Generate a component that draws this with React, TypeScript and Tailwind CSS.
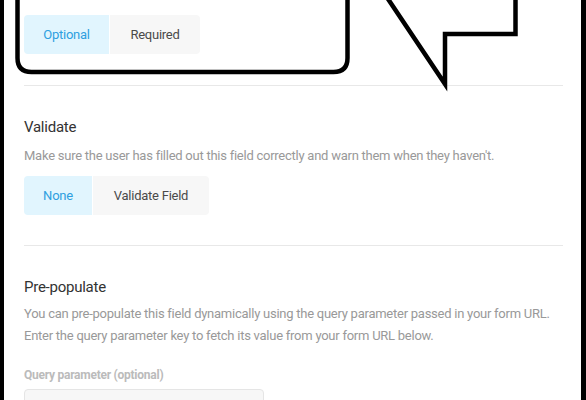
import React from 'react';

function Toggle({ options, active }: { options: { label: string; w: string }[]; active: number }) {
  return (
    <div className="flex gap-px">
      {options.map((o, i) => (
        <div
          key={o.label}
          className={`flex h-[39px] items-center justify-center text-[13px] ${o.w} ${
            i === 0 ? 'rounded-l' : ''
          } ${i === options.length - 1 ? 'rounded-r' : ''} ${
            i === active ? 'bg-[#e1f5fe] text-[#2e9fe0]' : 'bg-[#f7f7f7] text-[#4a4a4a]'
          }`}
        >
          {o.label}
        </div>
      ))}
    </div>
  );
}

export default function App() {
  return (
    <div className="relative h-[400px] w-[586px] overflow-hidden border-l-4 border-r-[5px] border-black bg-white font-['Roboto',sans-serif] tracking-[-0.25px]">
      <div className="pl-5 pr-[18px]">
        {/* Required / Optional */}
        <div className="pt-[15px] pb-[31px]">
          <Toggle
            active={0}
            options={[
              { label: 'Optional', w: 'w-[85px]' },
              { label: 'Required', w: 'w-[90px]' },
            ]}
          />
        </div>
        <div className="h-px bg-[#e8e8e8]" />

        {/* Validate */}
        <div className="pt-[31px] pb-[30px]">
          <h3 className="text-[15px] leading-5 text-[#333]">Validate</h3>
          <p className="mt-2 text-[13px] leading-[22px] text-[#999]">
            Make sure the user has filled out this field correctly and warn them when they haven't.
          </p>
          <div className="mt-[9px]">
            <Toggle
              active={0}
              options={[
                { label: 'None', w: 'w-[68px]' },
                { label: 'Validate Field', w: 'w-[116px]' },
              ]}
            />
          </div>
        </div>
        <div className="h-px bg-[#e8e8e8]" />

        {/* Pre-populate */}
        <div className="pt-[31px]">
          <h3 className="text-[15px] leading-5 text-[#333]">Pre-populate</h3>
          <p className="mt-[6px] whitespace-nowrap text-[13px] leading-[22px] text-[#999]">
            You can pre-populate this field dynamically using the query parameter passed in your form URL.
            <br />
            Enter the query parameter key to fetch its value from your form URL below.
          </p>
          <label className="mt-5 block text-[12px] font-bold leading-4 text-[#bbb]">
            Query parameter (optional)
          </label>
          <div className="mt-[6px] h-9 w-[240px] rounded border border-[#e5e5e5] bg-[#f7f7f7]" />
        </div>
      </div>

      {/* callout annotation */}
      <svg className="pointer-events-none absolute left-[-4px] top-0" width="586" height="400" fill="none">
        <path
          d="M17.5 -10 L17.5 58 Q17.5 72 31.5 72 L333.5 72 Q347.5 72 347.5 58 L347.5 -10"
          stroke="#000"
          strokeWidth="4.5"
        />
        <path d="M380 -13 L445 84 L445 34 L515.5 34 L515.5 -10" stroke="#000" strokeWidth="4.5" strokeLinejoin="miter" />
      </svg>
    </div>
  );
}
